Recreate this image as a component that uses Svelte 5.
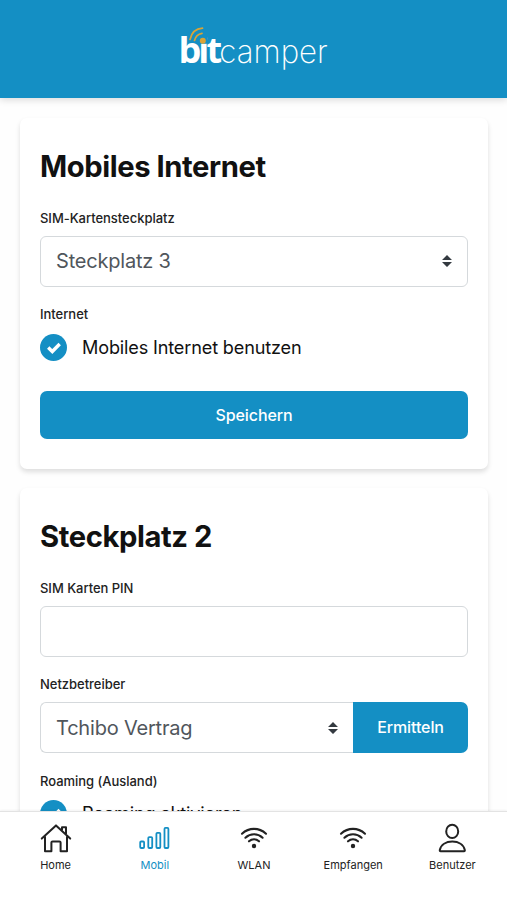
<script>
  let slot = $state('Steckplatz 3');
  let provider = $state('Tchibo Vertrag');
  let pin = $state('');
  const tabs = [
    { label: 'Home', icon: 'home' },
    { label: 'Mobil', icon: 'signal' },
    { label: 'WLAN', icon: 'wifi' },
    { label: 'Empfangen', icon: 'wifi' },
    { label: 'Benutzer', icon: 'user' }
  ];
  let active = $state('Mobil');
</script>

{#snippet arrows()}
  <svg class="arrows" width="10" height="12" viewBox="0 0 10 12" fill="#343a40">
    <path d="M0 5 5 0l5 5zM0 7l5 5 5-5z" />
  </svg>
{/snippet}

{#snippet check(label)}
  <div class="check">
    <span class="disc">
      <svg width="14" height="12" viewBox="0 0 14 12" fill="none" stroke="#fff" stroke-width="3.4"><path d="M1.2 5.6 5.3 9.5 12.7 2" /></svg>
    </span>
    <span>{label}</span>
  </div>
{/snippet}

<div class="app">
  <header>
    <svg class="logo" width="170" height="60" viewBox="169 20 170 60">
      <text class="bit" x="178.4 198.2 206.6" y="63.3">bit</text>
      <path d="M199 33h8v10.8h-8z" fill="#148fc4" />
      <circle cx="202.8" cy="40.8" r="3" fill="#d9a437" />
      <g fill="none" stroke="#d9a437" stroke-width="1.7" stroke-linecap="round">
        <path d="M190 39.5C191.5 33 196 28.6 202.5 28.2" />
        <path d="M194.5 40.5C195.5 36.5 198 34 202 33.3" />
      </g>
      <text class="camper" x="219.3" y="63.3" textLength="108.5" lengthAdjust="spacingAndGlyphs">camper</text>
    </svg>
  </header>

  <main>
    <section>
      <h1>Mobiles Internet</h1>
      <div class="label">SIM-Kartensteckplatz</div>
      <div class="field"><span>{slot}</span>{@render arrows()}</div>
      <div class="label">Internet</div>
      {@render check('Mobiles Internet benutzen')}
      <button class="save">Speichern</button>
    </section>

    <section>
      <h1>Steckplatz 2</h1>
      <div class="label">SIM Karten PIN</div>
      <input class="field" bind:value={pin} />
      <div class="label">Netzbetreiber</div>
      <div class="group">
        <div class="field"><span>{provider}</span>{@render arrows()}</div>
        <button>Ermitteln</button>
      </div>
      <div class="label">Roaming (Ausland)</div>
      {@render check('Roaming aktivieren')}
    </section>
  </main>

  <nav>
    {#each tabs as tab}
      <button class:active={tab.label === active} onclick={() => (active = tab.label)}>
        <svg width="34" height="32" viewBox="0 0 34 32" fill="none" stroke="currentColor" stroke-width="2" stroke-linecap="round" stroke-linejoin="round">
          {#if tab.icon === 'home'}
            <path d="M2.8 16.6 17 3.4 31.2 16.6M6 14.5V29.2H12.4V20.6Q12.4 19.4 13.6 19.4H20.4Q21.6 19.4 21.6 20.6V29.2H28V14.5M23 8V5.2H27V11.8" />
          {:else if tab.icon === 'signal'}
            <g stroke-width="1.8">
              <rect x="2.2" y="19.5" width="3.9" height="6.5" rx="1" /><rect x="10.3" y="15.1" width="3.9" height="10.9" rx="1" /><rect x="18.4" y="10.8" width="3.9" height="15.2" rx="1" /><rect x="26.5" y="5.9" width="3.9" height="20.1" rx="1" />
            </g>
          {:else if tab.icon === 'wifi'}
            <g stroke-width="2.1">
              <path d="M5 11.7C12 5.3 22 5.3 29 11.7M8.4 15.7C13.4 11.1 20.6 11.1 25.6 15.7M12 19.3C15 16.6 19 16.6 22 19.3" />
              <circle cx="17" cy="24" r="1.5" fill="currentColor" stroke-width="1.4" />
            </g>
          {:else}
            <ellipse cx="17.2" cy="9.4" rx="6" ry="6.7" />
            <path d="M5.6 29.2H29Q30 29.2 29.8 28C28.6 22.6 23.6 19.6 17.3 19.6S6 22.6 4.8 28Q4.6 29.2 5.6 29.2Z" />
          {/if}
        </svg>
        <span>{tab.label}</span>
      </button>
    {/each}
  </nav>
</div>

<style>
  :global(body) { margin: 0; background: #fff; }
  .app {
    height: 900px; overflow: hidden; display: flex; flex-direction: column;
    font-family: Inter, 'Liberation Sans', sans-serif; color: #111; background: #fefefe;
  }
  header {
    height: 98px; flex: none; background: #148fc4; display: flex; justify-content: center;
    box-sizing: border-box; padding-top: 20px; position: relative;
    box-shadow: 0 2px 7px rgba(0, 0, 0, 0.14);
  }
  .bit { font: 700 36px 'Open Sans', sans-serif; fill: #fff; }
  .camper { font: 200 33px Inter, sans-serif; fill: #fff; }
  main {
    flex: 1; min-height: 0; overflow: hidden; padding: 20px 19px 0 20px;
    display: flex; flex-direction: column; gap: 19px;
  }
  section {
    flex: none; box-sizing: border-box; padding: 28px 20px 30px; border-radius: 7px; background: #fff;
    box-shadow: 0 3px 5px rgba(0, 0, 0, 0.13);
  }
  h1 { margin: 0 0 20px; font-size: 29.2px; line-height: 42px; font-weight: 700; letter-spacing: -0.42px; }
  .label { font-size: 13px; line-height: 20px; font-weight: 500; margin-bottom: 8px; color: #222; letter-spacing: -0.03px; }
  .field {
    box-sizing: border-box; width: 100%; height: 51px; border: 1px solid #d5d9dc; border-radius: 6px;
    padding: 0 15px 1px; display: flex; align-items: center; justify-content: space-between;
    font: 400 20px Inter, sans-serif; letter-spacing: -0.2px; color: #50565c; background: #fff; margin-bottom: 17px;
  }
  .check { display: flex; align-items: center; gap: 15px; height: 27px; font-size: 18.1px; line-height: 22px; letter-spacing: -0.15px; margin-top: -1px; padding-top: 3px; }
  .check:last-child { margin-top: -2px; }
  .disc { width: 27px; height: 27px; border-radius: 50%; background: #148fc4; display: flex; align-items: center; justify-content: center; }
  .check span:last-child { margin-bottom: 1px; }
  section button {
    border: 0; background: #148fc4; color: #fff; font: 500 16px Inter, sans-serif; letter-spacing: -0.1px; padding: 0 0 1px;
  }
  .save { display: block; width: 100%; height: 48px; margin-top: 30px; border-radius: 7px; }
  .group { display: flex; margin-bottom: 18px; }
  .group .field { flex: 1; margin: 0; padding-bottom: 0; border-radius: 6px 0 0 6px; border-right: 0; }
  .group button { width: 115px; border-radius: 0 7px 7px 0; }
  nav {
    height: 89px; flex: none; box-sizing: border-box; border-top: 1px solid #e3e3e3; background: #fff;
    display: flex; padding: 0 5px 0 6px; position: relative; box-shadow: 0 -1px 2px rgba(0, 0, 0, 0.05);
  }
  nav button {
    flex: 1 1 0; border: 0; background: none; padding: 10px 0 0; color: #222;
    display: flex; flex-direction: column; align-items: center;
    font: 400 11px/16px Inter, sans-serif; gap: 3px;
  }
  nav .active { color: #148fc4; }
</style>
